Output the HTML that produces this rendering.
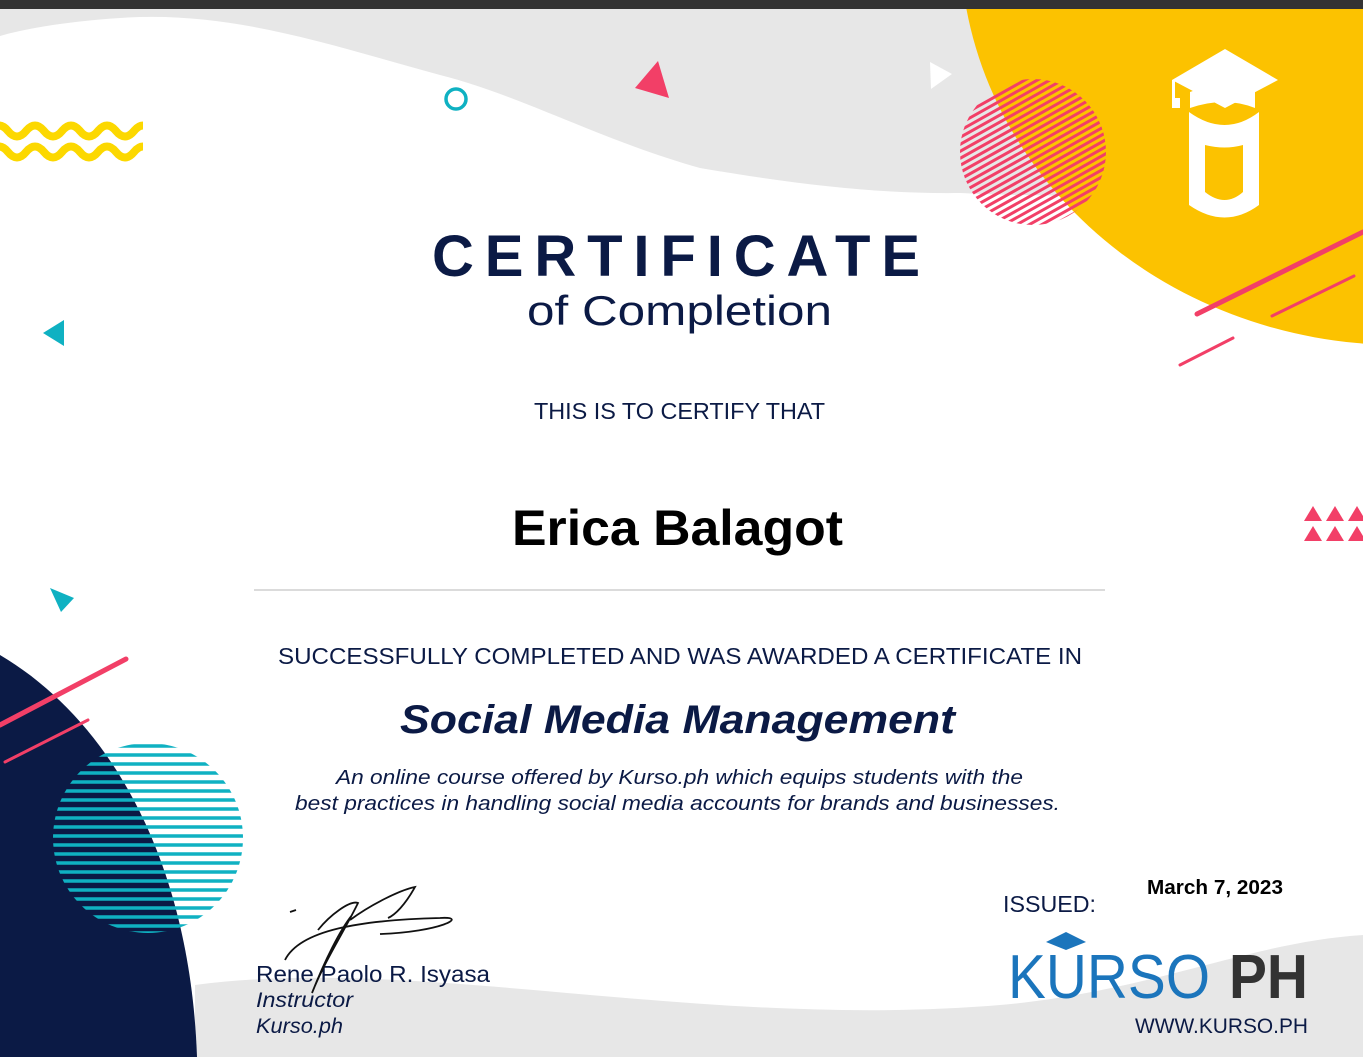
<!DOCTYPE html>
<html><head><meta charset="utf-8"><style>
html,body{margin:0;padding:0;background:#fff;}
svg{display:block;}
text{font-family:"Liberation Sans",sans-serif;}
</style></head><body>
<svg width="1363" height="1057" viewBox="0 0 1363 1057" xmlns="http://www.w3.org/2000/svg">
<defs>
<clipPath id="pc"><circle cx="1033" cy="152" r="73"/></clipPath>
<clipPath id="tc"><circle cx="148" cy="838" r="95"/></clipPath>
<clipPath id="wv"><rect x="0" y="100" width="143" height="80"/></clipPath>
</defs>
<rect width="1363" height="1057" fill="#fff"/>
<path d="M0,9 L1150,9 L1150,196 C1050,196 1000,195 960,193 C880,194 800,185 700,168 C600,140 520,95 440,75 C330,45 230,10 120,18 C60,22 20,30 0,36 Z" fill="#e7e7e7"/>
<path d="M195,985 C420,955 700,1030 1000,1005 C1150,992 1250,942 1363,935 L1363,1057 L195,1057 Z" fill="#e7e7e7"/>
<ellipse cx="1400" cy="-60" rx="440" ry="405" fill="#fcc200"/>
<rect x="0" y="0" width="1363" height="9" fill="#333333"/>
<g clip-path="url(#pc)" stroke="#f23f67" stroke-width="3">
<line x1="900" y1="150" x2="1150" y2="10"/><line x1="900" y1="157" x2="1150" y2="17"/><line x1="900" y1="164" x2="1150" y2="24"/><line x1="900" y1="171" x2="1150" y2="31"/><line x1="900" y1="178" x2="1150" y2="38"/><line x1="900" y1="185" x2="1150" y2="45"/><line x1="900" y1="192" x2="1150" y2="52"/><line x1="900" y1="199" x2="1150" y2="59"/><line x1="900" y1="206" x2="1150" y2="66"/><line x1="900" y1="213" x2="1150" y2="73"/><line x1="900" y1="220" x2="1150" y2="80"/><line x1="900" y1="227" x2="1150" y2="87"/><line x1="900" y1="234" x2="1150" y2="94"/><line x1="900" y1="241" x2="1150" y2="101"/><line x1="900" y1="248" x2="1150" y2="108"/><line x1="900" y1="255" x2="1150" y2="115"/><line x1="900" y1="262" x2="1150" y2="122"/><line x1="900" y1="269" x2="1150" y2="129"/><line x1="900" y1="276" x2="1150" y2="136"/><line x1="900" y1="283" x2="1150" y2="143"/><line x1="900" y1="290" x2="1150" y2="150"/><line x1="900" y1="297" x2="1150" y2="157"/><line x1="900" y1="304" x2="1150" y2="164"/><line x1="900" y1="311" x2="1150" y2="171"/><line x1="900" y1="318" x2="1150" y2="178"/><line x1="900" y1="325" x2="1150" y2="185"/><line x1="900" y1="332" x2="1150" y2="192"/><line x1="900" y1="339" x2="1150" y2="199"/><line x1="900" y1="346" x2="1150" y2="206"/><line x1="900" y1="353" x2="1150" y2="213"/><line x1="900" y1="360" x2="1150" y2="220"/><line x1="900" y1="367" x2="1150" y2="227"/><line x1="900" y1="374" x2="1150" y2="234"/><line x1="900" y1="381" x2="1150" y2="241"/><line x1="900" y1="388" x2="1150" y2="248"/>
</g>
<g fill="#fff">
<path d="M1225,49 L1278,80 L1225,108 L1172,80 Z"/>
<rect x="1172" y="80" width="3" height="22"/>
<rect x="1172" y="98" width="8" height="10"/>
<path d="M1190,92 Q1225,78 1255,92 L1255,108 Q1225,96 1190,108 Z"/>
<path d="M1189,112 Q1225,138 1259,112 L1259,205 Q1225,230 1189,205 Z"/>
</g>
<path d="M1205,145 Q1225,150 1243,145 L1243,192 Q1225,208 1205,192 Z" fill="#fcc200"/>
<g stroke="#f23f67" stroke-linecap="round">
<line x1="1197" y1="314" x2="1363" y2="232" stroke-width="5"/>
<line x1="1272" y1="316" x2="1354" y2="276" stroke-width="3"/>
<line x1="1180" y1="365" x2="1233" y2="338" stroke-width="3"/>
</g>
<circle cx="456" cy="99" r="10" fill="none" stroke="#0fb1c2" stroke-width="3.5"/>
<path d="M658,61 L669,98 L635,88 Z" fill="#f23f67"/>
<path d="M930,62 L952,74 L931,89 Z" fill="#fff"/>
<path d="M64,320 L64,346 L43,333 Z" fill="#0fb1c2"/>
<path d="M50,588 L74,598 L61,612 Z" fill="#0fb1c2"/>
<g fill="#f23f67">
<path d="M1313,506 L1322,521 L1304,521 Z"/><path d="M1335,506 L1344,521 L1326,521 Z"/><path d="M1357,506 L1366,521 L1348,521 Z"/>
<path d="M1313,526 L1322,541 L1304,541 Z"/><path d="M1335,526 L1344,541 L1326,541 Z"/><path d="M1357,526 L1366,541 L1348,541 Z"/>
</g>
<g fill="none" stroke="#fcd800" stroke-width="8" clip-path="url(#wv)">
<path d="M-10,131 q9,-11 18,0 t18,0 t18,0 t18,0 t18,0 t18,0 t18,0 t18,0 t18,0"/>
<path d="M-10,152 q9,-11 18,0 t18,0 t18,0 t18,0 t18,0 t18,0 t18,0 t18,0 t18,0"/>
</g>
<path d="M0,655 C110,720 190,860 197,1057 L0,1057 Z" fill="#0b1a45"/>
<g clip-path="url(#tc)" stroke="#0fb1c2" stroke-width="3.4">
<line x1="50" y1="746" x2="250" y2="746"/><line x1="50" y1="755" x2="250" y2="755"/><line x1="50" y1="764" x2="250" y2="764"/><line x1="50" y1="773" x2="250" y2="773"/><line x1="50" y1="782" x2="250" y2="782"/><line x1="50" y1="791" x2="250" y2="791"/><line x1="50" y1="800" x2="250" y2="800"/><line x1="50" y1="809" x2="250" y2="809"/><line x1="50" y1="818" x2="250" y2="818"/><line x1="50" y1="827" x2="250" y2="827"/><line x1="50" y1="836" x2="250" y2="836"/><line x1="50" y1="845" x2="250" y2="845"/><line x1="50" y1="854" x2="250" y2="854"/><line x1="50" y1="863" x2="250" y2="863"/><line x1="50" y1="872" x2="250" y2="872"/><line x1="50" y1="881" x2="250" y2="881"/><line x1="50" y1="890" x2="250" y2="890"/><line x1="50" y1="899" x2="250" y2="899"/><line x1="50" y1="908" x2="250" y2="908"/><line x1="50" y1="917" x2="250" y2="917"/><line x1="50" y1="926" x2="250" y2="926"/><line x1="50" y1="933" x2="250" y2="933"/>
</g>
<g stroke="#f23f67" stroke-linecap="round">
<line x1="0" y1="725" x2="126" y2="659" stroke-width="5"/>
<line x1="5" y1="762" x2="88" y2="720" stroke-width="3"/>
</g>
<g fill="#0b1a45">
<text x="432" y="276" font-size="58" font-weight="bold" textLength="488" lengthAdjust="spacing">CERTIFICATE</text>
<text x="527" y="325" font-size="42" textLength="305" lengthAdjust="spacingAndGlyphs">of Completion</text>
<text x="534" y="419" font-size="23" textLength="291" lengthAdjust="spacingAndGlyphs">THIS IS TO CERTIFY THAT</text>
<text x="278" y="664" font-size="23" textLength="804" lengthAdjust="spacingAndGlyphs">SUCCESSFULLY COMPLETED AND WAS AWARDED A CERTIFICATE IN</text>
<text x="400" y="733" font-size="40" font-weight="bold" font-style="italic" textLength="555" lengthAdjust="spacingAndGlyphs">Social Media Management</text>
<text x="336" y="784" font-size="20" font-style="italic" textLength="687" lengthAdjust="spacingAndGlyphs">An online course offered by Kurso.ph which equips students with the</text>
<text x="295" y="810" font-size="20" font-style="italic" textLength="765" lengthAdjust="spacingAndGlyphs">best practices in handling social media accounts for brands and businesses.</text>
<text x="256" y="982" font-size="23" textLength="234" lengthAdjust="spacingAndGlyphs">Rene Paolo R. Isyasa</text>
<text x="256" y="1007" font-size="21" font-style="italic" textLength="97" lengthAdjust="spacingAndGlyphs">Instructor</text>
<text x="256" y="1033" font-size="21" font-style="italic" textLength="87" lengthAdjust="spacingAndGlyphs">Kurso.ph</text>
<text x="1003" y="912" font-size="23" textLength="93" lengthAdjust="spacingAndGlyphs">ISSUED:</text>
<text x="1135" y="1033" font-size="21" textLength="173" lengthAdjust="spacingAndGlyphs">WWW.KURSO.PH</text>
</g>
<text x="512" y="545" font-size="50" font-weight="bold" fill="#000" textLength="331" lengthAdjust="spacingAndGlyphs">Erica Balagot</text>
<line x1="254" y1="590" x2="1105" y2="590" stroke="#cfcfcf" stroke-width="1.5"/>
<text x="1147" y="894" font-size="20" font-weight="bold" fill="#000" textLength="136" lengthAdjust="spacingAndGlyphs">March 7, 2023</text>
<text x="1008" y="998" font-size="62" fill="#1b75bc" textLength="202" lengthAdjust="spacingAndGlyphs">KURSO</text>
<text x="1229" y="998" font-size="62" font-weight="bold" fill="#333" textLength="79" lengthAdjust="spacingAndGlyphs">PH</text>
<path d="M1066,932 L1086,942 L1066,950 L1046,942 Z" fill="#1b75bc"/>
<g fill="none" stroke="#111" stroke-width="1.8">
<path d="M285,960 C300,930 360,920 440,918 C470,916 440,932 380,934"/>
<path d="M318,930 C330,915 350,900 358,903 C345,930 325,960 312,993 C325,960 340,930 352,915"/>
<path d="M350,920 C370,905 400,890 415,887 C405,905 395,915 388,918"/>
<path d="M290,912 L296,910"/>
</g>
</svg>
</body></html>
